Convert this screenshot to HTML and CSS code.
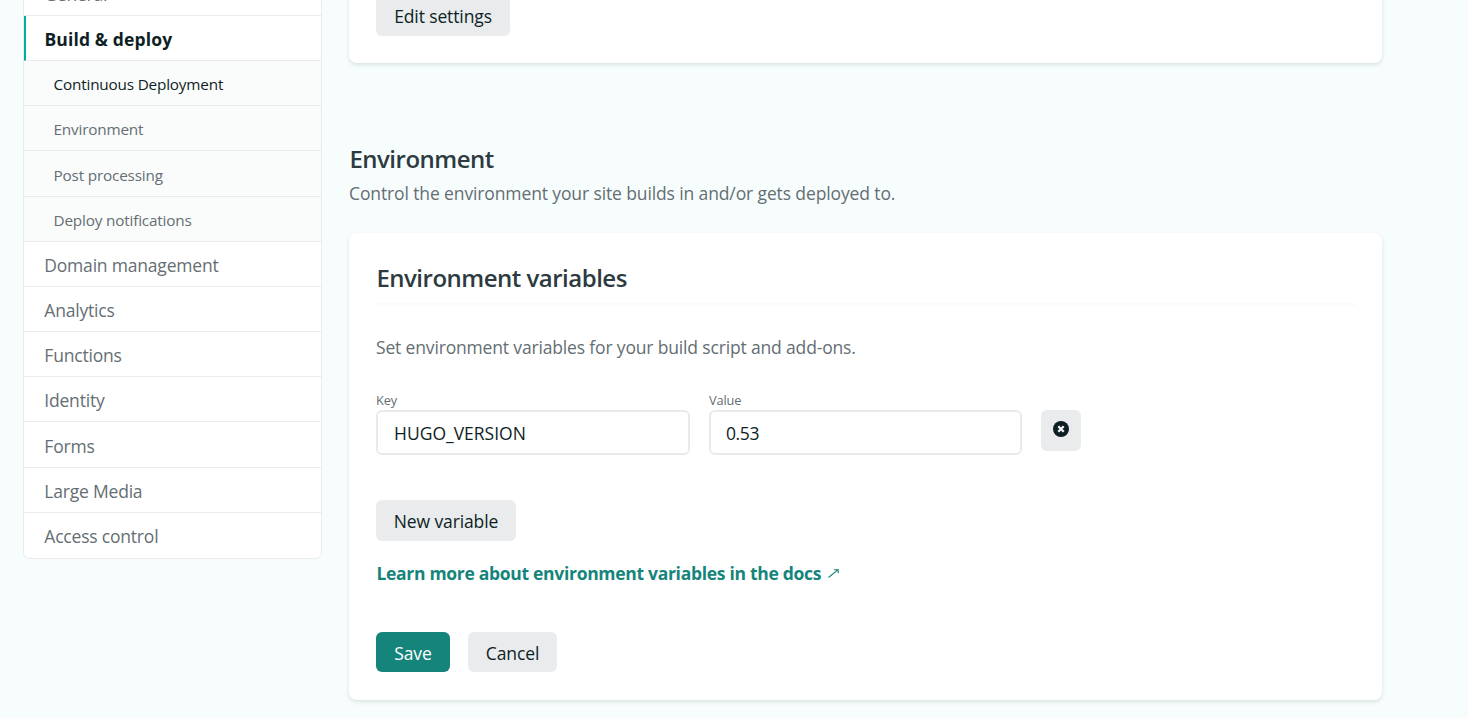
FILE: index.html
```
<!DOCTYPE html>
<html lang="en">
<head>
<meta charset="utf-8">
<title>Build &amp; deploy settings</title>
<link rel="stylesheet" href="styles.css">
</head>
<body>
<div class="layout">
  <nav class="sidebar">
    <a class="item">General</a>
    <a class="item active">Build &amp; deploy</a>
    <a class="item sub current">Continuous Deployment</a>
    <a class="item sub">Environment</a>
    <a class="item sub">Post processing</a>
    <a class="item sub">Deploy notifications</a>
    <a class="item">Domain management</a>
    <a class="item">Analytics</a>
    <a class="item">Functions</a>
    <a class="item">Identity</a>
    <a class="item">Forms</a>
    <a class="item">Large Media</a>
    <a class="item">Access control</a>
  </nav>
  <main class="content">
    <section class="card card-top">
      <button class="btn btn-edit">Edit settings</button>
    </section>
    <header class="intro">
      <h2 class="title">Environment</h2>
      <p class="text">Control the environment your site builds in and/or gets deployed to.</p>
    </header>
    <section class="card card-env">
      <h3 class="title card-title">Environment variables</h3>
      <p class="text card-text">Set environment variables for your build script and add-ons.</p>
      <div class="fields">
        <div class="field field-key"><label class="label">Key</label><div class="input">HUGO_VERSION</div></div>
        <div class="field field-value"><label class="label">Value</label><div class="input input-value">0.53</div></div>
        <button class="btn btn-remove" aria-label="Remove">
          <svg width="16" height="16" viewBox="0 0 16 16"><circle cx="8" cy="8" r="8" fill="#0e1e25"/><path d="M5.3 5.3l5.4 5.4M10.7 5.3l-5.4 5.4" stroke="#f4f5f6" stroke-width="2.3"/></svg>
        </button>
      </div>
      <button class="btn btn-new">New variable</button>
      <a class="docs">Learn more about environment variables in the docs
        <svg width="11" height="9" viewBox="0 0 11 9" fill="none" stroke="#15847b" stroke-width="1.1"><path d="M.5 8.5L9.8.8M6 .7h4.2v3.6"/></svg>
      </a>
      <div class="actions">
        <button class="btn btn-save">Save</button>
        <button class="btn btn-cancel">Cancel</button>
      </div>
    </section>
  </main>
</div>
</body>
</html>
```

FILE: styles.css
```
* { box-sizing: border-box; }
html, body { height: 718px; overflow: hidden; }
body {
  margin: 0;
  background: #f7fdfd;
  color: #0e1e25;
  font: 17.5px/24px "Open Sans", "Noto Sans", sans-serif;
  letter-spacing: -0.12px;
}
.layout { display: flex; gap: 27px; padding-left: 23px; }
.sidebar {
  width: 299px;
  height: 589.2px;
  margin-top: -30.2px;
  flex: none;
  background: #fff;
  border: 1px solid #e9ebed;
  border-radius: 6px;
}
.item {
  display: block;
  height: 45.16px;
  padding: 11.14px 0 0 20.3px;
  border-bottom: 1px solid #e9ebed;
  color: #646e73;
  letter-spacing: -0.2px;
  white-space: nowrap;
}
.item:last-child { border-bottom: 0; }
.item.active {
  padding-left: 18.4px;
  border-left: 2px solid #00ad9f;
  color: #0e1e25;
  font-weight: 700;
  letter-spacing: 0.15px;
}
.item.sub { padding-left: 29.5px; background: #fafbfb; font-size: 15.3px; letter-spacing: -0.18px; }
.item.current { color: #0e1e25; }
.content { width: 1033px; flex: none; }
.card {
  background: #fff;
  border-radius: 8px;
  box-shadow: 0 2px 4px rgba(14, 30, 37, .12);
}
.card-top { height: 83px; margin-top: -20px; padding: 15px 27px; }
.btn {
  display: flex;
  align-items: center;
  justify-content: center;
  height: 41px;
  padding: 1px 0 0;
  border: 0;
  border-radius: 6px;
  background: #e9ebed;
  color: #0e1e25;
  font: inherit;
  letter-spacing: -0.12px;
  white-space: nowrap;
}
.btn-edit { width: 134px; }
.intro { height: 170px; padding-top: 80px; }
.title { margin: 0; color: #2d3b41; font-size: 24px; line-height: 32px; font-weight: 600; letter-spacing: -0.5px; text-indent: 0.4px; white-space: nowrap; }
.text { margin: 0; color: #646e73; white-space: nowrap; }
.intro .text { margin-top: 6px; }
.card-env { height: 467px; padding: 29px 27px 0; }
.card-title { height: 44px; border-bottom: 3px solid #fafbfb; }
.card-text { margin-top: 29px; letter-spacing: -0.16px; }
.fields { display: flex; align-items: flex-start; margin-top: 33px; }
.field-key { width: 314px; margin-right: 19px; }
.field-value { width: 313px; margin-right: 19px; }
.label { display: block; height: 18px; line-height: 16px; font-size: 12.8px; color: #646e73; }
.input { height: 45px; padding: 9px 0 0 16px; border: 2px solid #e9ebeb; border-radius: 6px; background: #fff; letter-spacing: 0; }
.input-value { padding-left: 15px; letter-spacing: -0.4px; }
.btn-remove { width: 40px; margin-top: 18px; padding: 0 0 3px; }
.btn-new { width: 140px; margin-top: 45px; }
.docs { display: flex; align-items: center; gap: 6.5px; margin-top: 20px; padding-left: 0.4px; color: #15847b; font-weight: 700; letter-spacing: -0.3px; white-space: nowrap; }
.actions { display: flex; gap: 18px; margin-top: 47px; }
.actions .btn { height: 40px; padding-top: 2px; }
.btn-save { width: 74px; background: #15847b; color: #fff; }
.btn-cancel { width: 89px; }
```
